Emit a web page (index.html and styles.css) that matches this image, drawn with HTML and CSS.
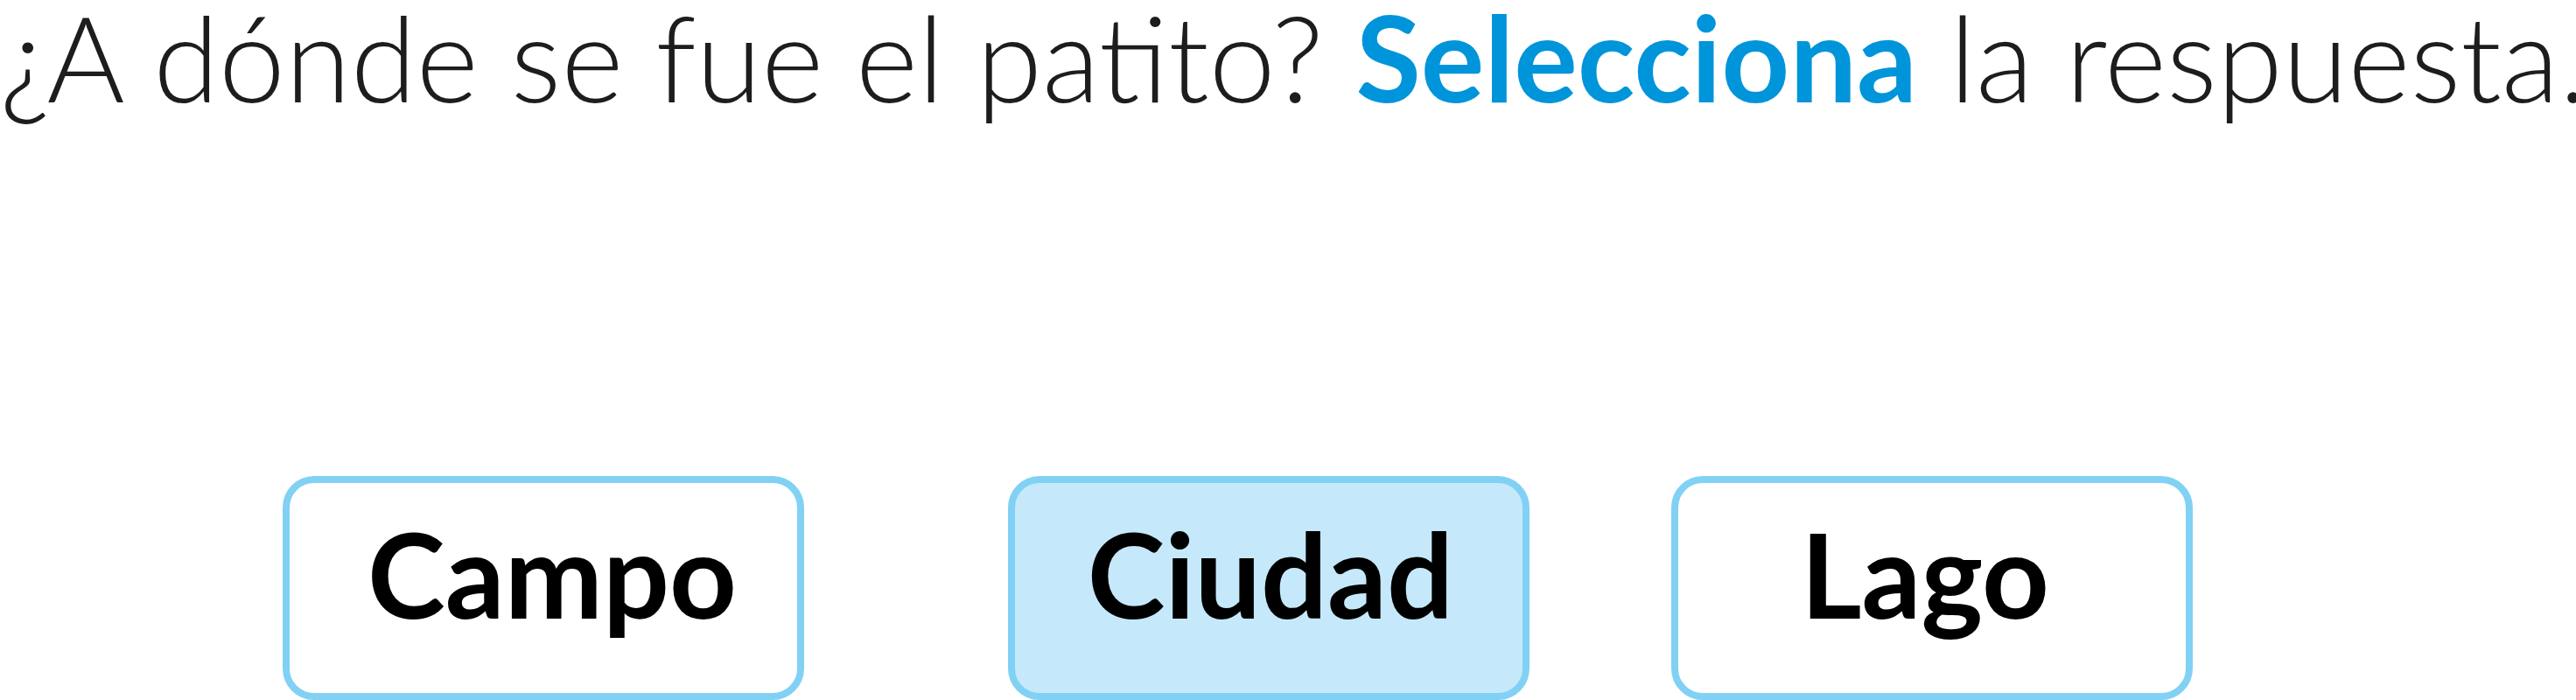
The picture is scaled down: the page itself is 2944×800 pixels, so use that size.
FILE: index.html
```html
<!DOCTYPE html>
<html lang="es">
<head>
<meta charset="utf-8">
<title>¿A dónde se fue el patito?</title>
<link rel="stylesheet" href="styles.css">
</head>
<body>
<main class="page">
  <h1 class="question">¿A dónde se fue el patito? <strong class="hint">Selecciona</strong> la respuesta.</h1>
  <div class="options">
    <button class="option opt-1" type="button">Campo</button>
    <button class="option opt-2 selected" type="button">Ciudad</button>
    <button class="option opt-3" type="button">Lago</button>
  </div>
</main>
</body>
</html>
```

FILE: styles.css
```css
html, body {
  margin: 0;
  padding: 0;
  background: #ffffff;
}

.page {
  width: 2944px;
  height: 800px;
  overflow: hidden;
  font-family: Lato, "Liberation Sans", sans-serif;
}

.question {
  margin: 0;
  font-size: 136px;
  line-height: 129px;
  font-weight: 300;
  color: #1d1d1b;
  text-align: center;
  white-space: nowrap;
}

.hint {
  font-weight: 700;
  color: #0095da;
}

.options {
  display: flex;
  margin-top: 415px;
  padding-left: 323px;
}

.option {
  box-sizing: border-box;
  width: 596px;
  height: 256px;
  border: 8px solid #81d1f5;
  border-radius: 36px;
  background: #ffffff;
  font-family: Lato, "Liberation Sans", sans-serif;
  font-weight: 700;
  font-size: 134px;
  color: #000000;
  display: flex;
  align-items: center;
  justify-content: center;
  padding: 0 0 34px 0;
}

.opt-1 {
  padding-left: 20px;
}

.opt-2 {
  margin-left: 233px;
  padding-left: 4px;
}

.opt-3 {
  margin-left: 162px;
  padding-right: 16px;
}

.selected {
  background: #c5e9fb;
}
```
